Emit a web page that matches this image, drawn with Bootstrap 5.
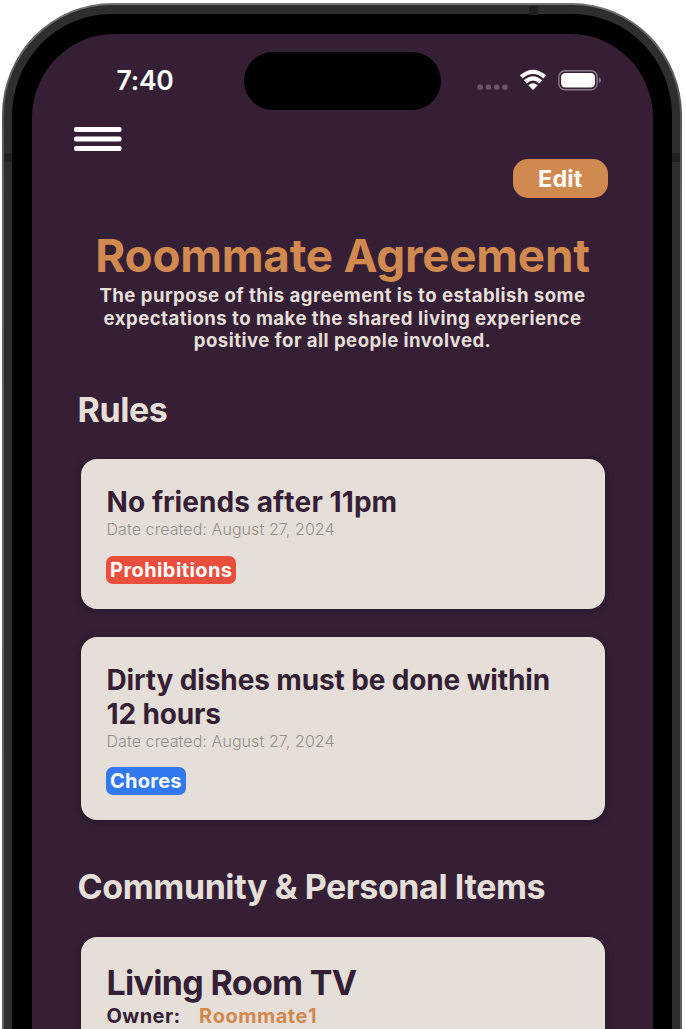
<!DOCTYPE html>
<html lang="en">
<head>
<meta charset="utf-8">
<meta name="viewport" content="width=device-width, initial-scale=1">
<title>Roommate Agreement</title>
<link href="https://cdn.jsdelivr.net/npm/bootstrap@5.3.0/dist/css/bootstrap.min.css" rel="stylesheet">
<style>
  :root { --plum: #351f35; --sand: #e6dfd9; --copper: #d0894f; }
  body { background: #fff; font-family: Inter, "Liberation Sans", sans-serif; height: 1029px; overflow: hidden; }
  .phone { width: 680px; height: 1026px; margin: 3px 0 0 2px; padding: 2px 2px 0 2px; border-radius: 110px 110px 0 0 / 112px 112px 0 0; background: linear-gradient(#747474, #555 10%, #62676a 20%, #5d6264); }
  .metal { height: 100%; padding: 9px 8px 0; background: #2e2e2e; border-radius: 108px 108px 0 0 / 110px 110px 0 0; }
  .bezel { height: 100%; padding: 20px 19px 0 20px; background: #000; border-radius: 99px 99px 0 0 / 102px 102px 0 0; }
  .screen { height: 100%; background: var(--plum); border-radius: 82px 82px 0 0 / 84px 84px 0 0; color: var(--sand); }
  .seam { background: #1f1f1f; top: 150px; width: 8px; height: 9px; }
  .seam-left { left: 2px; }
  .seam-right { right: 2px; }
  .seam-top { width: 9px; top: 3px; left: 527px; }
  .status { height: 76px; padding: 18px 52px 0 84.5px; }
  .clock { width: 127.5px; font-size: 26.5px; font-weight: 600; line-height: 57px; letter-spacing: -.2px; color: #fff; }
  .island { width: 197px; height: 58px; background: #000; }
  .status-icons { margin-top: 16px; }
  .toolbar { padding: 0 45px 0 42px; height: 118px; }
  .menu-btn { width: 48px; height: 24px; margin-top: 17px; }
  .edit-btn { width: 95.5px; height: 39.5px; margin-top: 48.5px; border-radius: 15px; background: var(--copper); color: #fff; font-size: 23.4px; font-weight: 700; line-height: 40px; letter-spacing: .1px; }
  .agreement-title { font-size: 45.8px; font-weight: 700; line-height: 56px; letter-spacing: -.25px; color: var(--copper); }
  .intro { font-size: 18.6px; font-weight: 700; line-height: 22.6px; letter-spacing: .46px; }
  .section-title { font-size: 34px; font-weight: 700; line-height: 40px; letter-spacing: -.42px; padding-left: 45.5px; }
  .rules-title { margin-top: 38px; margin-bottom: 29.5px; }
  .items-title { margin-top: 47px; margin-bottom: 29.5px; }
  .entry { margin: 0 48.5px 0 49px; padding: 26px 25px 0 25.5px; border-radius: 16px; background: var(--sand); box-shadow: 0 2px 10px rgba(0,0,0,.3); color: var(--plum); }
  .entry-short { height: 149.5px; margin-bottom: 28.5px; }
  .entry-short .entry-title { font-kerning: none; letter-spacing: .08px; }
  .entry-tall { height: 183px; letter-spacing: -.13px; }
  .entry-cut { height: 92px; padding-top: 25px; border-radius: 16px 16px 0 0; }
  .entry-title { font-size: 28px; font-weight: 700; line-height: 34px; }
  .entry-date { font-size: 16px; font-weight: 300; line-height: 20px; color: #94908d; letter-spacing: .08px; }
  .tag { height: 28px; margin: 17px 0 0 -.5px; padding: 0 4px; border-radius: 7px; color: #fff; font-size: 20px; font-weight: 700; line-height: 28px; letter-spacing: .42px; }
  .tag-red { background: #ea4f3d; }
  .tag-blue { background: #3478f0; letter-spacing: .25px; margin-top: 16px; }
  .item-title { font-size: 34px; font-weight: 700; line-height: 42px; letter-spacing: -.68px; }
  .owner { font-size: 20px; font-weight: 700; line-height: 24px; letter-spacing: .4px; gap: 18.5px; }
  .owner-name { color: var(--copper); font-kerning: none; letter-spacing: .5px; }
</style>
</head>
<body>
<div class="phone position-relative">
  <div class="metal">
    <div class="bezel">
      <main class="screen">
        <div class="status d-flex align-items-start">
          <div class="clock">7:40</div>
          <div class="island rounded-pill"></div>
          <svg class="status-icons ms-auto flex-shrink-0" width="128" height="24" viewBox="0 0 128 24">
            <g fill="#6a556b"><rect x="4.4" y="16.6" width="5.4" height="5.2" rx="1.8"/><rect x="12.7" y="16.6" width="5.4" height="5.2" rx="1.8"/><rect x="21" y="16.6" width="5.4" height="5.2" rx="1.8"/><rect x="29.3" y="16.6" width="5.4" height="5.2" rx="1.8"/></g>
            <g fill="none" stroke="#fff" stroke-width="4.2"><path d="M48.2 8.9Q60 -1.2 71.8 8.9"/><path d="M52.3 13.9Q60 6.9 67.7 13.9"/></g>
            <path d="M55.3 17.3Q60 13 64.7 17.3L60 22Z" fill="#fff"/>
            <rect x="85.9" y="2.7" width="38.2" height="19" rx="6" fill="none" stroke="#8c7c8d" stroke-width="1.4"/>
            <rect x="88.1" y="4.9" width="33.9" height="14.6" rx="4.2" fill="#fff"/>
            <path d="M126 9.2q2 .8 2 3t-2 3z" fill="#8c7c8d"/>
          </svg>
        </div>
        <div class="toolbar d-flex justify-content-between align-items-start">
          <svg class="menu-btn" viewBox="0 0 48 24" fill="#fff"><rect width="47.5" height="5" rx="2"/><rect y="9.5" width="47.5" height="5" rx="2"/><rect y="19" width="47.5" height="5" rx="2"/></svg>
          <button class="edit-btn border-0 p-0" type="button">Edit</button>
        </div>
        <header class="text-center">
          <h1 class="agreement-title m-0 text-nowrap">Roommate Agreement</h1>
          <p class="intro m-0 text-nowrap">The purpose of this agreement is to establish some<br>expectations to make the shared living experience<br>positive for all people involved.</p>
        </header>
        <h2 class="section-title rules-title">Rules</h2>
        <article class="entry entry-short">
          <h3 class="entry-title m-0">No friends after 11pm</h3>
          <div class="entry-date">Date created: August 27, 2024</div>
          <span class="tag tag-red d-inline-block">Prohibitions</span>
        </article>
        <article class="entry entry-tall">
          <h3 class="entry-title m-0 text-nowrap">Dirty dishes must be done within<br>12 hours</h3>
          <div class="entry-date">Date created: August 27, 2024</div>
          <span class="tag tag-blue d-inline-block">Chores</span>
        </article>
        <h2 class="section-title items-title text-nowrap">Community &amp; Personal Items</h2>
        <article class="entry entry-cut">
          <h3 class="item-title m-0">Living Room TV</h3>
          <div class="owner d-flex"><span>Owner:</span><span class="owner-name">Roommate1</span></div>
        </article>
      </main>
    </div>
  </div>
  <i class="seam seam-left position-absolute"></i>
  <i class="seam seam-right position-absolute"></i>
  <i class="seam seam-top position-absolute"></i>
</div>
<script src="https://cdn.jsdelivr.net/npm/bootstrap@5.3.0/dist/js/bootstrap.bundle.min.js"></script>
</body>
</html>
